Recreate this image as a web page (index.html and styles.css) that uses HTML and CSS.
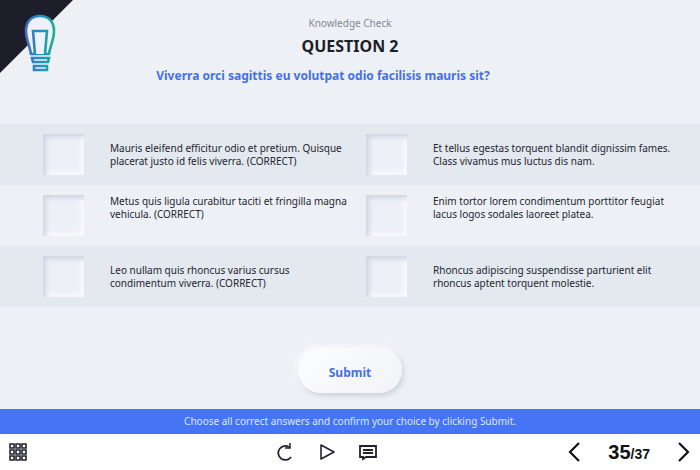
FILE: index.html
```html
<!DOCTYPE html>
<html lang="en">
  <head>
    <meta charset="UTF-8" />
    <meta name="viewport" content="width=device-width, initial-scale=1.0" />
    <title>Knowledge Check</title>
    <link rel="stylesheet" href="styles.css">
  </head>
  <body>
    <form class="slide">
      <div class="corner"></div>
      <svg class="bulb" viewBox="0 0 34 60" aria-hidden="true">
        <defs>
          <linearGradient id="bulb-stroke" gradientUnits="userSpaceOnUse" x1="2" y1="0" x2="32" y2="0">
            <stop offset="0" stop-color="#4269c8" />
            <stop offset="0.5" stop-color="#258fc4" />
            <stop offset="1" stop-color="#20af8c" />
          </linearGradient>
        </defs>
        <g fill="#eef2f8" stroke="url(#bulb-stroke)" stroke-width="2.6">
          <path d="M8 41 C7 33 3 27 3 18 C3 9 8 3 17 3 C26 3 31 9 31 18 C31 27 27 33 26 41 Z" />
          <path d="M12 41 L10 18 H24 L22 41" />
          <path d="M9 45 H26 L25 49 H10 Z" />
          <path d="M11 53 H24 V57 H11 Z" />
        </g>
      </svg>

      <header class="heading">
        <p class="kicker">Knowledge Check</p>
        <h1>QUESTION 2</h1>
        <h2>Viverra orci sagittis eu volutpat odio facilisis mauris sit?</h2>
      </header>

      <div class="answers">
        <div class="row">
          <label class="answer">
            <input type="checkbox" name="answer" value="1" />
            <span>Mauris eleifend efficitur odio et pretium. Quisque<br />placerat justo id felis viverra. (CORRECT)</span>
          </label>
          <label class="answer">
            <input type="checkbox" name="answer" value="2" />
            <span>Et tellus egestas torquent blandit dignissim fames.<br />Class vivamus mus luctus dis nam.</span>
          </label>
        </div>
        <div class="row row-top">
          <label class="answer">
            <input type="checkbox" name="answer" value="3" />
            <span>Metus quis ligula curabitur taciti et fringilla magna<br />vehicula. (CORRECT)</span>
          </label>
          <label class="answer">
            <input type="checkbox" name="answer" value="4" />
            <span>Enim tortor lorem condimentum porttitor feugiat<br />lacus logos sodales laoreet platea.</span>
          </label>
        </div>
        <div class="row">
          <label class="answer">
            <input type="checkbox" name="answer" value="5" />
            <span>Leo nullam quis rhoncus varius cursus<br />condimentum viverra. (CORRECT)</span>
          </label>
          <label class="answer">
            <input type="checkbox" name="answer" value="6" />
            <span>Rhoncus adipiscing suspendisse parturient elit<br />rhoncus aptent torquent molestie.</span>
          </label>
        </div>
      </div>

      <button class="submit" type="button">Submit</button>
    </form>

    <p class="hint">Choose all correct answers and confirm your choice by clicking Submit.</p>

    <nav class="player">
      <button type="button" aria-label="Table of contents">
        <svg width="18" height="18" viewBox="0 0 18 18" fill="none" stroke="#23232e" stroke-width="1.6">
          <path d="M1 1h4v4H1z M7 1h4v4H7z M13 1h4v4h-4z M1 7h4v4H1z M7 7h4v4H7z M13 7h4v4h-4z M1 13h4v4H1z M7 13h4v4H7z M13 13h4v4h-4z" />
        </svg>
      </button>
      <div class="controls">
        <button type="button" aria-label="Replay">
          <svg width="18" height="18" viewBox="0 0 18 18" fill="none" stroke="#23232e" stroke-width="1.8">
            <path d="M16 14 A7 7 0 1 1 14 4" />
            <path d="M15 0V5H10" stroke-width="1.5" />
          </svg>
        </button>
        <button type="button" aria-label="Play">
          <svg width="18" height="18" viewBox="0 0 18 18" fill="none" stroke="#23232e" stroke-width="1.6" stroke-linejoin="round">
            <path d="M4 2L17 9L4 16Z" />
          </svg>
        </button>
        <button type="button" aria-label="Notes">
          <svg width="18" height="18" viewBox="0 0 18 18" fill="none" stroke="#23232e" stroke-width="1.8">
            <path d="M1 3H17V14H7L4 16V14H1Z" />
            <path d="M4 7H14 M4 10H14" />
          </svg>
        </button>
      </div>
      <div class="pager">
        <button type="button" aria-label="Previous slide">
          <svg width="12" height="20" viewBox="0 0 12 20" fill="none" stroke="#111" stroke-width="2.2">
            <path d="M11 1L2 10L11 19" />
          </svg>
        </button>
        <p class="count"><strong>35</strong>/37</p>
        <button type="button" aria-label="Next slide">
          <svg width="12" height="20" viewBox="0 0 12 20" fill="none" stroke="#111" stroke-width="2.2">
            <path d="M1 1L10 10L1 19" />
          </svg>
        </button>
      </div>
    </nav>
  </body>
</html>
```

FILE: styles.css
```css
* {
  margin: 0;
  padding: 0;
  box-sizing: border-box;
}
body {
  display: flex;
  flex-direction: column;
  min-height: 100vh;
  background: #fff;
  color: #23262f;
  font-family: "Noto Sans", "Open Sans", sans-serif;
}
button {
  border: none;
  background: none;
  font-family: inherit;
  cursor: pointer;
}
svg {
  display: block;
}
.slide {
  position: relative;
  display: flex;
  flex: 1;
  flex-direction: column;
  align-items: center;
  background: #edf1f6;
}
.corner {
  position: absolute;
  top: 0;
  left: 0;
  width: 73px;
  height: 73px;
  background: #1d1e2a;
  clip-path: polygon(0 0, 100% 0, 0 100%);
}
.bulb {
  position: absolute;
  top: 13px;
  left: 23px;
  width: 34px;
  height: 60px;
}
.heading {
  padding-top: 16px;
  text-align: center;
}
.kicker {
  color: #858994;
  font-size: 10px;
  line-height: 14px;
}
h1 {
  margin-top: 4px;
  color: #1d1e2a;
  font-size: 16px;
  line-height: 24px;
}
h2 {
  margin-top: 8px;
  padding-right: 54px;
  color: #4470e8;
  font-size: 12px;
  line-height: 20px;
}
.answers {
  width: 100%;
  margin-top: 38px;
}
.row {
  display: grid;
  grid-template-columns: 1fr 1fr;
  padding: 10px 11px 10px 43px;
}
.row:nth-child(odd) {
  background: #e4e8ef;
}
.answer {
  display: flex;
  align-items: center;
  gap: 26px;
  font-size: 10px;
  line-height: 13px;
  cursor: pointer;
}
.row-top .answer {
  align-items: flex-start;
}
.answer input {
  flex: none;
  width: 41px;
  height: 41px;
  appearance: none;
  background: #edf0f7;
  box-shadow: inset 3px 3px 5px #ced5df, inset -3px -3px 4px #fafbfd;
}
.answer input:checked {
  background: #4575f5;
}
.submit {
  width: 104px;
  height: 46px;
  margin-top: 40px;
  padding-top: 4px;
  border-radius: 23px;
  background: linear-gradient(135deg, #fcfdfe, #f2f3f6);
  box-shadow: 2px 3px 5px #ced2da, -2px -2px 5px #f7f9fc;
  color: #4470e8;
  font-size: 12px;
  font-weight: bold;
}
.hint {
  background: #4575f5;
  color: #dde6ff;
  font-size: 10px;
  line-height: 25px;
  text-align: center;
}
.player {
  display: grid;
  grid-template-columns: 1fr auto 1fr;
  align-items: center;
  height: 36px;
  padding: 0 10px 0 9px;
}
.controls {
  display: flex;
  gap: 24px;
  padding-right: 48px;
}
.pager {
  display: flex;
  align-items: center;
  justify-content: flex-end;
  gap: 28px;
}
.count {
  color: #111;
  font-family: "Liberation Sans", Arial, sans-serif;
  font-size: 14px;
  font-weight: bold;
}
.count strong {
  font-size: 20px;
}
```
